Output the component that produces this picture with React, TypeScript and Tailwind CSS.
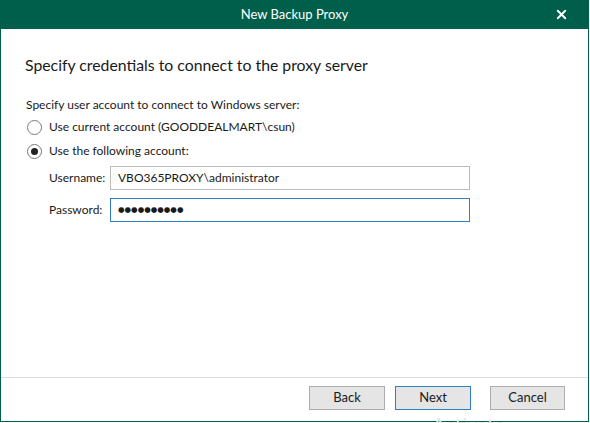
import { X } from "lucide-react";

const font = { fontFamily: 'Lato, "Noto Sans", sans-serif' };

function Radio({ checked, label }: { checked?: boolean; label: string }) {
  return (
    <div className="flex items-center h-6">
      <span className="ml-[26px] w-[15px] h-[15px] rounded-full border border-[#7a7a7a] bg-white flex items-center justify-center">
        {checked && <span className="w-[7px] h-[7px] rounded-full bg-[#222]" />}
      </span>
      <span className="ml-[7px] text-[12px] text-[#1a1a1a]">{label}</span>
    </div>
  );
}

export default function App() {
  return (
    <div className="w-[590px] h-[423px] bg-white overflow-hidden relative" style={font}>
      <div className="w-[589px] h-[422px] border border-[#005f4b] border-t-0 flex flex-col">
        {/* title bar */}
        <div className="h-[29px] bg-[#005f4b] flex items-center relative -mx-px">
          <div className="flex-1 text-center text-white text-[13px]">New Backup Proxy</div>
          <X className="absolute right-[20px] top-[7px] w-[15px] h-[15px] text-white" strokeWidth={3} />
        </div>

        <div className="flex-1 flex flex-col">
          <div className="pl-[24px] pt-[24px] text-[15.8px] text-[#1a1a1a] leading-6">
            Specify credentials to connect to the proxy server
          </div>

          <div className="pl-[25px] mt-[18px] text-[12px] text-[#1a1a1a] leading-5">
            Specify user account to connect to Windows server:
          </div>
          <Radio label="Use current account (GOODDEALMART\csun)" />
          <Radio checked label="Use the following account:" />

          <div className="flex items-center mt-[3px]">
            <span className="ml-[48px] w-[61px] text-[12px] text-[#1a1a1a]">Username:</span>
            <div className="w-[360px] h-[24px] border border-[#bdbdbd] flex items-center px-[7px] text-[12px] text-[#1a1a1a]">
              VBO365PROXY\administrator
            </div>
          </div>
          <div className="flex items-center mt-[8px]">
            <span className="ml-[48px] w-[61px] text-[12px] text-[#1a1a1a]">Password:</span>
            <div className="w-[360px] h-[24px] border border-[#2f7fc8] flex items-center px-[7px] text-[#1a1a1a]">
              <span className="text-[7.5px]" style={{ fontFamily: '"DejaVu Sans", sans-serif' }}>●●●●●●●●●●</span>
            </div>
          </div>
        </div>

        <div className="border-t border-[#dcdcdc] h-[44px] flex items-start pt-[8px]">
          <div className="ml-[308px] flex gap-[10px]">
            <button className="w-[76px] h-[24px] bg-[#e5e5e5] border border-[#adadad] text-[13px] text-[#1a1a1a]">Back</button>
            <button className="w-[76px] h-[24px] bg-[#e5e5e5] border border-[#2f7fc8] text-[13px] text-[#1a1a1a]">Next</button>
          </div>
          <button className="ml-[19px] w-[75px] h-[24px] bg-[#e5e5e5] border border-[#adadad] text-[13px] text-[#1a1a1a]">Cancel</button>
        </div>
      </div>
      <div className="absolute left-[432px] top-[409px] text-[20px] text-[#e6e6e6]">Activate Windows</div>
    </div>
  );
}
